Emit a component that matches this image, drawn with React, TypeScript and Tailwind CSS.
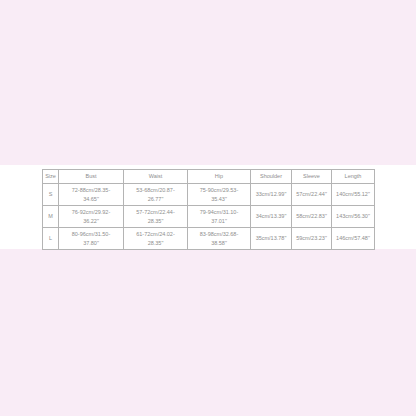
import React from 'react';

const head = ['Size', 'Bust', 'Waist', 'Hip', 'Shoulder', 'Sleeve', 'Length'];
const widths = ['w-[16px]', 'w-[65px]', 'w-[64px]', 'w-[63px]', 'w-[41px]', 'w-[40px]', 'w-[43px]'];

const rows: string[][][] = [
  [['S'], ['72-88cm/28.35-', '34.65"'], ['53-68cm/20.87-', '26.77"'], ['75-90cm/29.53-', '35.43"'], ['33cm/12.99"'], ['57cm/22.44"'], ['140cm/55.12"']],
  [['M'], ['76-92cm/29.92-', '36.22"'], ['57-72cm/22.44-', '28.35"'], ['79-94cm/31.10-', '37.01"'], ['34cm/13.39"'], ['58cm/22.83"'], ['143cm/56.30"']],
  [['L'], ['80-96cm/31.50-', '37.80"'], ['61-72cm/24.02-', '28.35"'], ['83-98cm/32.68-', '38.58"'], ['35cm/13.78"'], ['59cm/23.23"'], ['146cm/57.48"']],
];

const App = () => {
  return (
    <main className="w-[416px] h-[416px] bg-[#f9ecf6] flex flex-col" style={{ fontFamily: '"Liberation Sans", Arial, sans-serif' }}>
      <div className="h-[165px]" />
      {/* white band with size chart */}
      <div className="h-[84px] bg-white pt-[4px] pl-[42px]">
        <table className="border-collapse table-fixed text-[5.5px] leading-[9px] text-[#8e8e8e]">
          <thead>
            <tr className="h-[14px]">
              {head.map((h, i) => (
                <th key={h} className={`${widths[i]} border border-[#b4b4b4] font-normal text-center p-0`}>
                  {h}
                </th>
              ))}
            </tr>
          </thead>
          <tbody>
            {rows.map((r) => (
              <tr key={r[0][0]} className="h-[22px]">
                {r.map((cell, i) => (
                  <td key={i} className="border border-[#b4b4b4] text-center p-0 whitespace-nowrap">
                    {cell.map((line, j) => (
                      <div key={j}>{line}</div>
                    ))}
                  </td>
                ))}
              </tr>
            ))}
          </tbody>
        </table>
      </div>
    </main>
  );
};

export default App;
